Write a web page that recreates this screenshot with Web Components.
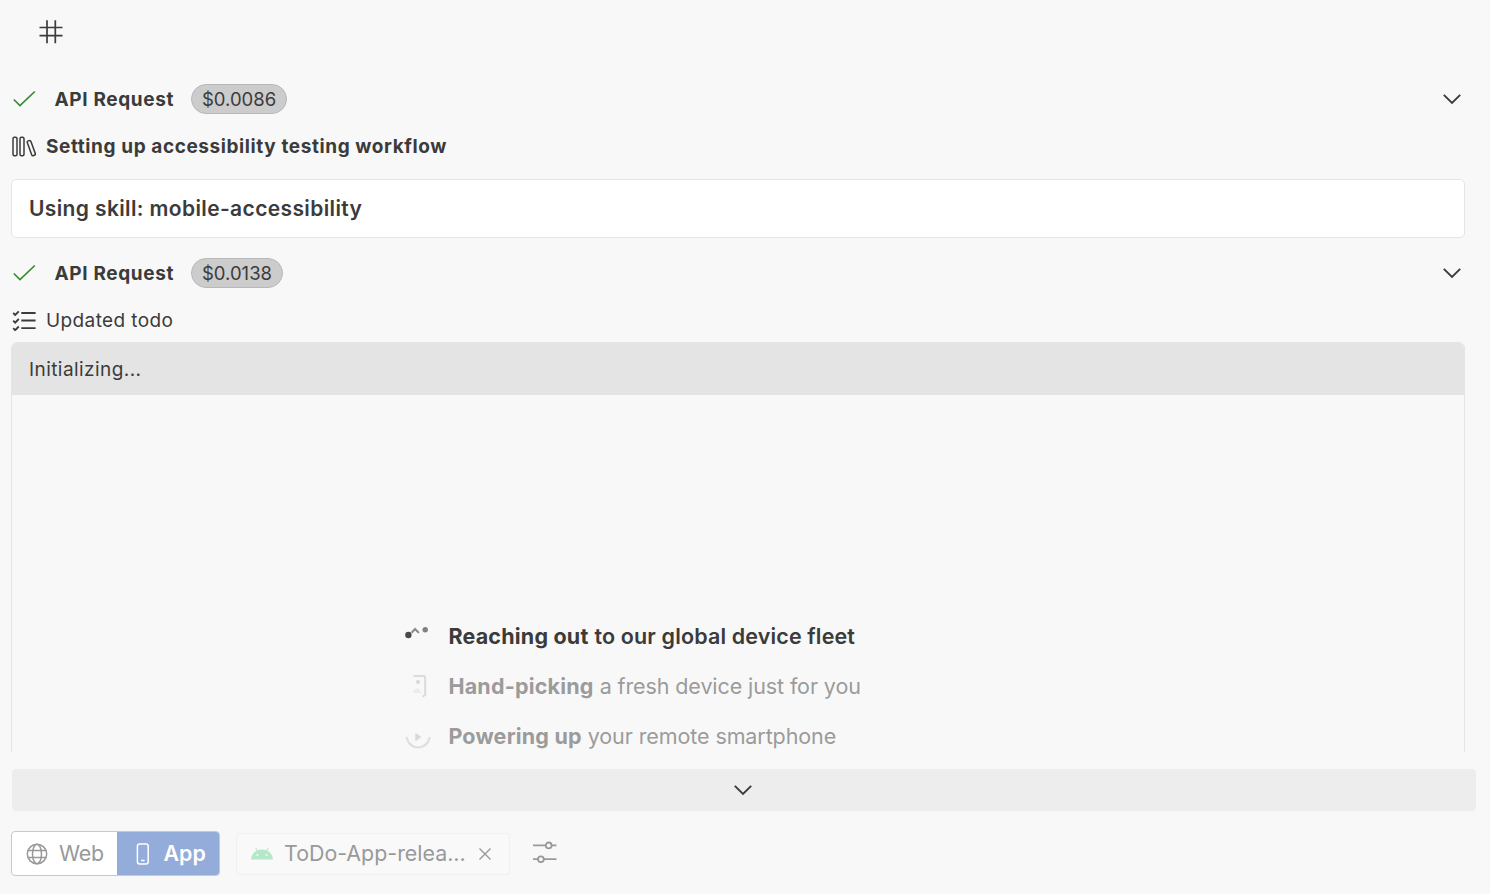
<!DOCTYPE html>
<html lang="en">
<head>
<meta charset="utf-8">
<title>Accessibility agent</title>
<style>
    body {
        margin: 0;
        background: #f8f8f8;
        color: #3b3b3b;
        font-family: Inter, "Liberation Sans", sans-serif;
        font-size: 19px;
    }
</style>
</head>
<body>
<agent-chat>
    <chat-icon slot="log" name="hash" class="hash"></chat-icon>
    <api-request slot="log" cost="$0.0086"></api-request>
    <log-title slot="log" icon="books" bold>Setting up accessibility testing workflow</log-title>
    <skill-card slot="log">Using skill: mobile-accessibility</skill-card>
    <api-request slot="log" cost="$0.0138"></api-request>
    <log-title slot="log" icon="checklist">Updated todo</log-title>
    <device-panel slot="log" status="Initializing...">
        <device-step icon="reach" active><b slot="lead">Reaching out</b>to our global device fleet</device-step>
        <device-step icon="pick"><b slot="lead">Hand-picking</b>a fresh device just for you</device-step>
        <device-step icon="power"><b slot="lead">Powering up</b>your remote smartphone</device-step>
    </device-panel>
    <scroll-bar slot="footer"></scroll-bar>
    <target-toolbar slot="footer" file="ToDo-App-relea..."></target-toolbar>
</agent-chat>

<script>
const icons = {
    hash: [24, 24, '<path d="M8 .2v23M16.300 .2v23M.5 7.500h23M.5 15.700h23" stroke-width="1.700"/>'],
    check: [24, 18, '<path d="M.8 9.500l6.200 6L21.800 1.500" stroke-width="1.700"/>'],
    books: [25, 21, '<rect x="1" y="1.300" width="4" height="18.400" rx="1.500"/><rect x="8" y="1.300" width="4" height="18.400" rx="1.500"/><rect x="17.400" y="4.300" width="3.800" height="15.600" rx="1.500" transform="rotate(-20 19.300 12.100)"/>'],
    checklist: [25, 21, '<path d="M9.300 3h14.300M9.300 10.500h14.300M9.300 18.200h14.300M1.200 3l2 2L6.800 1.300M1.200 10.700l2 2 3.600-3.700M1.200 18.200l2 2 3.600-3.700" stroke-width="1.800"/>'],
    chevron: [20, 12, '<path d="M1.800 1.800L10 10l8.200-8.200" stroke-width="1.900"/>'],
    reach: [26, 24, '<path d="M6.600 8.700l3.400-3.700 3.900 3.900" stroke="#888" stroke-width="2"/><circle cx="3.400" cy="11" r="3.200" fill="#4a4a4a" stroke="none"/><circle cx="20.200" cy="5.700" r="2.700" fill="#808080" stroke="none"/>'],
    pick: [26, 26, '<path d="M8.500 2.900h9.700q2 0 2 2V21.500l-2.500 2.300" stroke="#dadada" stroke-width="2"/><rect x="11.300" y="7.200" width="3.500" height="3.500" fill="#d8d8d8" stroke="none"/><path d="M7.500 20l2.800-4.500h3.400L17 20z" fill="#ececec" stroke="none"/>'],
    power: [26, 28, '<path d="M1.700 15a11.500 11.500 0 0 0 22.900 0" stroke="#dfdfdf" stroke-width="2.200"/><path d="M10.300 10.800v8.600l6-4.300z" fill="#d8d8d8" stroke="none"/>'],
    globe: [22, 22, '<circle cx="11" cy="11" r="9.700"/><ellipse cx="11" cy="11" rx="4.500" ry="9.700"/><path d="M2 7.500h18M2 14.500h18"/>'],
    phone: [14, 22, '<rect x="1.400" y="1" width="10.800" height="20" rx="2.200"/><path d="M5 17.400h3.600"/>'],
    android: [22, 13, '<path d="M0 12.400C.5 8.300 2.600 5.200 5.800 3.500L4.200.9l.8-.5 1.700 2.800c2.700-1.100 5.900-1.100 8.600 0L17 .4l.8.5-1.600 2.600c3.200 1.700 5.300 4.800 5.800 8.900z" fill="#b4e8c8" stroke="none"/><circle cx="6.400" cy="8" r="1" fill="#f8f8f8" stroke="none"/><circle cx="15.600" cy="8" r="1" fill="#f8f8f8" stroke="none"/>'],
    close: [14, 14, '<path d="M1.500 1.500l11 11M12.500 1.500l-11 11" stroke-width="1.400"/>'],
    sliders: [26, 24, '<path d="M1 5.400h12.700M19.700 5.400H24.500M1 19.200h5M12 19.200h12.500" stroke-width="1.800"/><circle cx="16.700" cy="5.400" r="2.900" stroke-width="1.800"/><circle cx="8.900" cy="19.200" r="2.900" stroke-width="1.800"/>']
};

class ChatIcon extends HTMLElement {
    constructor() {
        super();
        this.attachShadow({ mode: 'open' });
    }

    connectedCallback() {
        const [w, h, shapes] = icons[this.getAttribute('name')];
        this.shadowRoot.innerHTML = `
            <style>
                :host { display: block; flex: none; }
                svg { display: block; }
            </style>
            <svg width="${w}" height="${h}" viewBox="0 0 ${w} ${h}" fill="none" stroke="currentColor" stroke-width="1.5">${shapes}</svg>
        `;
    }
}

class AgentChat extends HTMLElement {
    constructor() {
        super();
        this.attachShadow({ mode: 'open' }).innerHTML = `
            <style>
                :host {
                    display: flex;
                    flex-direction: column;
                    height: 894px;
                    overflow: hidden;
                }
                .log {
                    height: 752px;
                    padding: 0 25px 0 11px;
                    overflow: hidden;
                }
                .footer { padding: 17px 14px 0 12px; }
                ::slotted(.hash) { padding: 20px 0 32px 28px; }
            </style>
            <div class="log"><slot name="log"></slot></div>
            <div class="footer"><slot name="footer"></slot></div>
        `;
    }
}

class ApiRequest extends HTMLElement {
    constructor() {
        super();
        this.attachShadow({ mode: 'open' }).innerHTML = `
            <style>
                :host {
                    display: flex;
                    align-items: center;
                    height: 46px;
                    padding: 0 3px 0 2px;
                }
                .check { color: #388a34; }
                b {
                    width: 136.5px;
                    margin-left: 17.5px;
                    font-weight: 700;
                    letter-spacing: 0.64px;
                    white-space: nowrap;
                }
                .cost {
                    box-sizing: border-box;
                    height: 30px;
                    padding: 0 10px;
                    border: 1px solid #b8b8b8;
                    border-radius: 15px;
                    background: #ccc;
                    font-size: 18.5px;
                    line-height: 28px;
                }
                .toggle { margin-left: auto; }
            </style>
            <chat-icon class="check" name="check"></chat-icon>
            <b>API Request</b>
            <span class="cost"></span>
            <chat-icon class="toggle" name="chevron"></chat-icon>
        `;
        this.shadowRoot.querySelector('.cost').textContent = this.getAttribute('cost');
    }
}

class LogTitle extends HTMLElement {
    constructor() {
        super();
        this.attachShadow({ mode: 'open' }).innerHTML = `
            <style>
                :host {
                    display: flex;
                    align-items: center;
                    gap: 9px;
                    height: 48px;
                    margin-bottom: -2px;
                    padding-left: 1px;
                    letter-spacing: 0.4px;
                }
                :host([bold]) {
                    height: 49px;
                    margin-bottom: 8px;
                    font-weight: 700;
                    letter-spacing: 0.59px;
                }
            </style>
            <chat-icon name="${this.getAttribute('icon')}"></chat-icon>
            <span><slot></slot></span>
        `;
    }
}

class SkillCard extends HTMLElement {
    constructor() {
        super();
        this.attachShadow({ mode: 'open' }).innerHTML = `
            <style>
                :host {
                    display: block;
                    box-sizing: border-box;
                    height: 59px;
                    margin-bottom: 12px;
                    padding: 0 17px;
                    border: 1px solid #e5e5e5;
                    border-radius: 5px;
                    background: #fff;
                    font-size: 21px;
                    font-weight: 600;
                    letter-spacing: 0.37px;
                    line-height: 57px;
                }
            </style>
            <slot></slot>
        `;
    }
}

class DevicePanel extends HTMLElement {
    constructor() {
        super();
        this.attachShadow({ mode: 'open' }).innerHTML = `
            <style>
                :host {
                    display: block;
                    box-sizing: border-box;
                    height: 480px;
                    border: 1px solid #e5e5e5;
                    border-radius: 6px;
                    overflow: hidden;
                }
                header {
                    height: 52px;
                    padding-left: 17px;
                    background: #e4e4e4;
                    letter-spacing: 0.43px;
                    line-height: 53px;
                }
                .steps { padding: 216px 0 0 393px; }
            </style>
            <header></header>
            <div class="steps"><slot></slot></div>
        `;
        this.shadowRoot.querySelector('header').textContent = this.getAttribute('status');
    }
}

class DeviceStep extends HTMLElement {
    constructor() {
        super();
        this.attachShadow({ mode: 'open' }).innerHTML = `
            <style>
                :host {
                    display: flex;
                    align-items: center;
                    height: 50px;
                    color: #9b9b9b;
                    font-size: 21.5px;
                    letter-spacing: -0.1px;
                }
                :host([active]) {
                    color: #3b3b3b;
                    font-weight: 600;
                    letter-spacing: 0.14px;
                }
                chat-icon { margin-right: 17.4px; }
                .text { display: flex; gap: 6px; white-space: nowrap; }
                ::slotted(b) {
                    font-weight: 700;
                    letter-spacing: 0.2px;
                }
            </style>
            <chat-icon name="${this.getAttribute('icon')}"></chat-icon>
            <span class="text"><slot name="lead"></slot><span><slot></slot></span></span>
        `;
    }
}

class ScrollBar extends HTMLElement {
    constructor() {
        super();
        this.attachShadow({ mode: 'open' }).innerHTML = `
            <style>
                :host {
                    display: flex;
                    align-items: center;
                    justify-content: center;
                    height: 42px;
                    border-radius: 4px;
                    background: #ededed;
                }
                chat-icon { margin-right: 2px; }
            </style>
            <chat-icon name="chevron"></chat-icon>
        `;
    }
}

class TargetToolbar extends HTMLElement {
    constructor() {
        super();
        this.attachShadow({ mode: 'open' }).innerHTML = `
            <style>
                :host {
                    display: flex;
                    align-items: center;
                    margin: 20px 0 0 -1px;
                    color: #999;
                    font-size: 21.4px;
                }
                .switch {
                    display: flex;
                    box-sizing: border-box;
                    width: 209px;
                    height: 45px;
                    border: 1px solid #c9c9c9;
                    border-radius: 4px;
                    background: #fff;
                    overflow: hidden;
                }
                .web, .app { display: flex; align-items: center; }
                .web { width: 91px; padding-left: 14px; gap: 11px; }
                .web span { letter-spacing: -0.2px; }
                .app {
                    flex: 1;
                    padding-left: 19px;
                    gap: 13.5px;
                    background: #93acd9;
                    color: #fff;
                    font-weight: 600;
                }
                span { padding-bottom: 2px; }
                .file {
                    display: flex;
                    align-items: center;
                    box-sizing: border-box;
                    width: 274px;
                    height: 42px;
                    margin-left: 16px;
                    padding-left: 14px;
                    border: 1px solid #f0f0f0;
                    border-radius: 4px;
                    background: #f9f9f9;
                }
                .file span { width: 194px; margin-left: 11px; }
                .sliders { margin: 0 0 3px 22px; }
            </style>
            <div class="switch">
                <div class="web"><chat-icon name="globe"></chat-icon><span>Web</span></div>
                <div class="app"><chat-icon name="phone"></chat-icon><span>App</span></div>
            </div>
            <div class="file">
                <chat-icon name="android"></chat-icon>
                <span></span>
                <chat-icon name="close"></chat-icon>
            </div>
            <chat-icon class="sliders" name="sliders"></chat-icon>
        `;
        this.shadowRoot.querySelector('.file span').textContent = this.getAttribute('file');
    }
}

customElements.define('chat-icon', ChatIcon);
customElements.define('agent-chat', AgentChat);
customElements.define('api-request', ApiRequest);
customElements.define('log-title', LogTitle);
customElements.define('skill-card', SkillCard);
customElements.define('device-panel', DevicePanel);
customElements.define('device-step', DeviceStep);
customElements.define('scroll-bar', ScrollBar);
customElements.define('target-toolbar', TargetToolbar);
</script>
</body>
</html>
